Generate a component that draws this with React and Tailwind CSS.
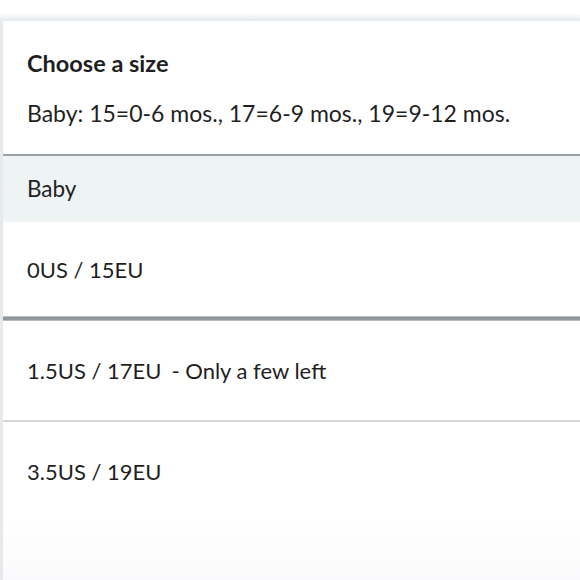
export default function App() {
  const font = { fontFamily: "Lato, 'Open Sans', sans-serif" };
  return (
    <div className="w-[580px] h-[580px] bg-white overflow-hidden flex flex-col text-[#1f1f1f]" style={font}>
      <div className="h-[13px] bg-white shrink-0" />
      <div className="h-[8px] shrink-0 bg-gradient-to-b from-white to-[#e4e9eb]" />
      <div className="flex-1 flex flex-col border-l-[3px] border-[#e6eaec] bg-white">
        <div className="h-[133px] flex flex-col pl-[24px] shrink-0">
          <div className="mt-[29px] text-[23.5px] font-bold leading-[26px]">Choose a size</div>
          <div className="mt-[24px] text-[23px] leading-[26px]">Baby: 15=0-6 mos., 17=6-9 mos., 19=9-12 mos.</div>
        </div>
        <div className="h-[2px] bg-[#9ba2a5] shrink-0" />
        <div className="h-[66px] bg-[#eef3f4] flex items-center pl-[24px] text-[22.5px] shrink-0">Baby</div>
        <div className="h-[94px] flex items-center pl-[24px] text-[22px] shrink-0">0US / 15EU</div>
        <div className="h-[5px] bg-[#8f989b] border-y border-[#b5bcbf] shrink-0" />
        <div className="h-[99px] flex items-center pl-[24px] text-[22px] shrink-0">1.5US / 17EU<span className="ml-[10px]">- Only a few left</span></div>
        <div className="h-[2px] bg-[#d4d7d8] shrink-0" />
        <div className="h-[98px] flex items-center pl-[24px] text-[22px] shrink-0">3.5US / 19EU</div>
        <div className="flex-1 bg-gradient-to-b from-white to-[#fafafc]" />
      </div>
    </div>
  );
}
